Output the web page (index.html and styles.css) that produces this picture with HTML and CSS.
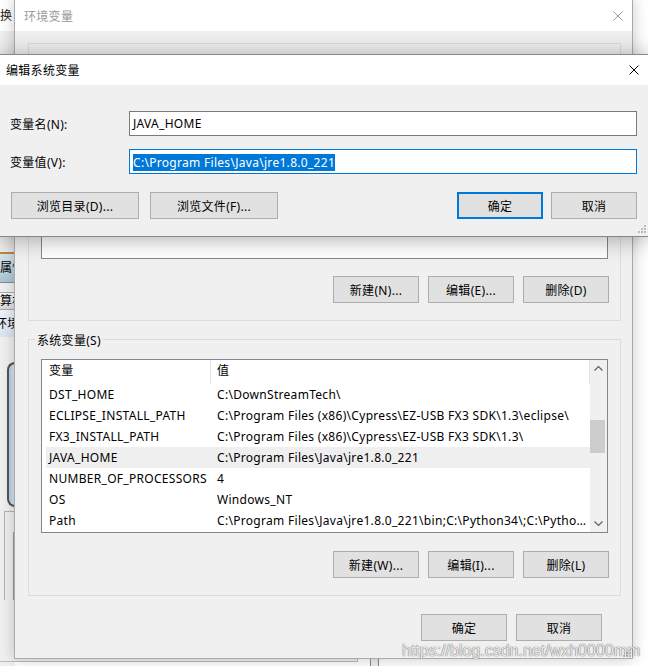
FILE: index.html
```html
<!DOCTYPE html>
<html lang="zh-CN">
<head>
  <meta charset="UTF-8" />
  <title>编辑系统变量</title>
  <link rel="stylesheet" href="styles.css">
</head>
<body>
<div class="desktop">

  <!-- ventana de Propiedades del sistema, solo se ve una franja -->
  <div class="sys-window">
    <div class="sys-top">换</div>
    <div class="sys-gap"></div>
    <div class="sys-tab">属性</div>
    <div class="sys-btn">算机</div>
    <div class="sys-env">环境</div>
    <div class="sys-frame"></div>
    <div class="sys-group">系<div class="sys-inner"></div></div>
  </div>

  <div class="bg-panel"></div>
  <div class="bg-line"></div>

  <!-- 环境变量 -->
  <div class="env-window">
    <div class="titlebar inactive">
      <span>环境变量</span>
      <svg class="close" width="10" height="10" viewBox="0 0 10 10"><path d="M0.5 0.5 L9.5 9.5 M9.5 0.5 L0.5 9.5" stroke="#999" stroke-width="1" fill="none"/></svg>
    </div>
    <div class="env-body">
      <div class="group user-group">
        <div class="listbox user-list"></div>
        <div class="btn-row">
          <button class="btn">新建(N)...</button>
          <button class="btn">编辑(E)...</button>
          <button class="btn">删除(D)</button>
        </div>
      </div>

      <div class="group">
        <div class="group-label">系统变量(S)</div>
        <div class="listbox sys-list">
          <div class="list-rows">
            <div class="list-head"><div class="c1">变量</div><div class="c2">值</div></div>
            <div class="row"><div class="c1">DST_HOME</div><div class="c2">C:\DownStreamTech\</div></div>
            <div class="row"><div class="c1">ECLIPSE_INSTALL_PATH</div><div class="c2">C:\Program Files (x86)\Cypress\EZ-USB FX3 SDK\1.3\eclipse\</div></div>
            <div class="row"><div class="c1">FX3_INSTALL_PATH</div><div class="c2">C:\Program Files (x86)\Cypress\EZ-USB FX3 SDK\1.3\</div></div>
            <div class="row selected"><div class="c1">JAVA_HOME</div><div class="c2">C:\Program Files\Java\jre1.8.0_221</div></div>
            <div class="row"><div class="c1">NUMBER_OF_PROCESSORS</div><div class="c2">4</div></div>
            <div class="row"><div class="c1">OS</div><div class="c2">Windows_NT</div></div>
            <div class="row"><div class="c1">Path</div><div class="c2">C:\Program Files\Java\jre1.8.0_221\bin;C:\Python34\;C:\Python34\Scripts\;C:\Windows\system32</div></div>
          </div>
          <div class="scrollbar">
            <svg width="17" height="17" viewBox="0 0 17 17"><path d="M4.5 10.5 L8.5 6.5 L12.5 10.5" stroke="#606060" stroke-width="1.2" fill="none"/></svg>
            <div class="track"><div class="thumb"></div></div>
            <svg width="17" height="17" viewBox="0 0 17 17"><path d="M4.5 6.5 L8.5 10.5 L12.5 6.5" stroke="#606060" stroke-width="1.2" fill="none"/></svg>
          </div>
        </div>
        <div class="btn-row">
          <button class="btn">新建(W)...</button>
          <button class="btn">编辑(I)...</button>
          <button class="btn">删除(L)</button>
        </div>
      </div>

      <div class="btn-row dialog-btns">
        <button class="btn">确定</button>
        <button class="btn">取消</button>
      </div>
    </div>
    <svg class="grip" width="9" height="9" viewBox="0 0 9 9"><path d="M7 1h2v2h-2z M4 4h2v2h-2z M7 4h2v2h-2z M1 7h2v2h-2z M4 7h2v2h-2z M7 7h2v2h-2z" fill="#bcbcbc"/></svg>
  </div>

  <!-- 编辑系统变量 -->
  <div class="edit-dialog">
    <div class="titlebar">
      <span>编辑系统变量</span>
      <svg class="close" width="10" height="10" viewBox="0 0 10 10"><path d="M0.5 0.5 L9.5 9.5 M9.5 0.5 L0.5 9.5" stroke="#000" stroke-width="1" fill="none"/></svg>
    </div>
    <div class="edit-body">
      <div class="field">
        <label>变量名(N):</label>
        <div class="textbox">JAVA_HOME</div>
      </div>
      <div class="field">
        <label>变量值(V):</label>
        <div class="textbox focused"><span class="sel">C:\Program Files\Java\jre1.8.0_221</span></div>
      </div>
      <div class="edit-btns">
        <button class="btn wide">浏览目录(D)...</button>
        <button class="btn wide">浏览文件(F)...</button>
        <span class="spacer"></span>
        <button class="btn default">确定</button>
        <button class="btn">取消</button>
      </div>
    </div>
    <svg class="grip" width="9" height="9" viewBox="0 0 9 9"><path d="M7 1h2v2h-2z M4 4h2v2h-2z M7 4h2v2h-2z M1 7h2v2h-2z M4 7h2v2h-2z M7 7h2v2h-2z" fill="#bcbcbc"/></svg>
  </div>

  <div class="watermark">https://blog.csdn.net/wxh0000mm</div>
</div>
</body>
</html>
```

FILE: styles.css
```css
* {
  box-sizing: border-box;
}

body {
  margin: 0;
  background: #fff;
  font-family: 'Noto Sans', 'Noto Sans CJK SC', sans-serif;
  font-size: 12px;
  letter-spacing: 0.3px;
  color: #000;
}

.desktop {
  position: relative;
  width: 648px;
  height: 666px;
  overflow: hidden;
  background: #fff;
}

/* franja de la ventana de atrás */
.sys-window {
  position: absolute;
  left: 0;
  top: 0;
  width: 15px;
  height: 666px;
  background: #f0f0f0;
  display: flex;
  flex-direction: column;
  overflow: hidden;
  white-space: nowrap;
}

.sys-top {
  flex: none;
  height: 31px;
  line-height: 31px;
  background: #fff;
  margin-left: -2px;
  padding-left: 2px;
  color: #222;
}

.sys-gap {
  flex: none;
  height: 221px;
}

.sys-tab {
  flex: none;
  height: 31px;
  line-height: 28px;
  border-top: 2px solid #c08a44;
  border-bottom: 1px solid #7f8f99;
  background: linear-gradient(#d9e8ef, #a8c5d6);
}

.sys-btn {
  flex: none;
  margin-top: 9px;
  height: 18px;
  line-height: 16px;
  border-top: 1px solid #aaa;
  border-bottom: 1px solid #aaa;
  background: linear-gradient(#fbfbfb, #dadada);
}

.sys-env {
  flex: none;
  height: 27px;
  line-height: 27px;
  margin-left: -5px;
  background: linear-gradient(#eef3fa, #d9e5f3);
}

.sys-frame {
  flex: none;
  margin: 25px 0 0 7px;
  height: 145px;
  border: 2px solid #555;
  border-right: none;
  border-radius: 8px 0 0 8px;
  background: linear-gradient(90deg, #b9cde2, #e3ecf5);
}

.sys-group {
  flex: none;
  margin: 4px 0 0 4px;
  height: 107px;
  border-left: 1px solid #b5b5b5;
  border-top: 1px solid #b5b5b5;
  padding-left: 8px;
  line-height: 14px;
}

.sys-inner {
  margin: 6px 0 0 0;
  height: 86px;
  border-left: 1px solid #9a9a9a;
  border-bottom: 1px solid #9a9a9a;
}

.bg-panel {
  position: absolute;
  left: 0;
  top: 600px;
  width: 358px;
  height: 62px;
  background: #f0f0f0;
  border-right: 1px solid #bbb;
  border-bottom: 1px solid #bbb;
}

.bg-line {
  position: absolute;
  left: 370px;
  top: 640px;
  width: 9px;
  height: 30px;
  background: #e9eef0;
  border-left: 1px solid #888;
  border-right: 1px solid #888;
}

/* ventanas */
.titlebar {
  display: flex;
  align-items: center;
  justify-content: space-between;
  background: #fff;
}

.titlebar.inactive {
  color: #999;
}

.close {
  display: block;
}

.env-window {
  position: absolute;
  left: 14px;
  top: -1px;
  width: 619px;
  height: 660px;
  border: 1px solid #aaa;
  background: #f0f0f0;
  box-shadow: 0 0 14px rgba(0, 0, 0, 0.22);
}

.env-window .titlebar {
  height: 31px;
  padding: 0 9px 0 9px;
}

.env-body {
  padding: 0 11px 0 13px;
  display: flex;
  flex-direction: column;
}

.group {
  border: 1px solid #dcdcdc;
  padding: 0 12px 17px 12px;
  display: flex;
  flex-direction: column;
  margin-top: 18px;
}

.user-group {
  margin-top: 12px;
  padding-top: 15px;
}

.group-label {
  align-self: flex-start;
  margin: -7px 0 0 -6px;
  padding: 0 2px;
  line-height: 16px;
  background: #f0f0f0;
}

.listbox {
  border: 1px solid #828790;
  background: #fff;
}

.user-list {
  height: 200px;
}

.sys-list {
  margin-top: 10px;
  height: 174px;
  display: flex;
}

.list-rows {
  flex: 1;
  min-width: 0;
  padding-left: 4px;
}

.list-head,
.row {
  display: flex;
  white-space: nowrap;
}

.list-head {
  height: 24px;
  line-height: 22px;
}

.row {
  height: 21px;
  line-height: 21px;
}

.row.selected {
  background: #efefef;
}

.c1 {
  width: 165px;
  flex: none;
  padding-left: 3px;
  overflow: hidden;
}

.c2 {
  flex: 1;
  min-width: 0;
  padding-left: 6px;
  overflow: hidden;
  text-overflow: ellipsis;
}

.list-head .c1,
.list-head .c2 {
  border-right: 1px solid #e5e5e5;
}

.scrollbar {
  width: 17px;
  flex: none;
  background: #f0f0f0;
  display: flex;
  flex-direction: column;
}

.scrollbar svg {
  display: block;
  flex: none;
}

.track {
  flex: 1;
  padding-top: 43px;
}

.thumb {
  height: 33px;
  margin: 0 2px 0 0;
  background: #cdcdcd;
}

.btn-row {
  display: flex;
  justify-content: flex-end;
  gap: 9px;
  margin-top: 18px;
  margin-right: -1px;
}

.user-group .btn-row {
  margin-top: 17px;
}

.dialog-btns {
  margin-right: 19px;
}

.btn {
  width: 86px;
  height: 27px;
  padding: 0;
  margin: 0;
  border: 1px solid #adadad;
  background: #e1e1e1;
  font-family: inherit;
  font-size: 12px;
  letter-spacing: 0.3px;
  color: #000;
}

.btn.wide {
  width: 128px;
}

.btn.default {
  border: 2px solid #0078d7;
}

.grip {
  position: absolute;
  right: 1px;
  bottom: 1px;
}

/* 编辑系统变量 */
.edit-dialog {
  position: absolute;
  left: -1px;
  top: 54px;
  width: 651px;
  height: 183px;
  border: 1px solid #888;
  background: #f0f0f0;
  box-shadow: 0 2px 22px rgba(0, 0, 0, 0.32);
}

.edit-dialog .titlebar {
  height: 30px;
  padding: 0 10px 0 6px;
}

.edit-body {
  padding: 26px 12px 0 10px;
  display: flex;
  flex-direction: column;
}

.field {
  display: flex;
  align-items: center;
  margin-bottom: 13px;
}

.field label {
  width: 119px;
  flex: none;
}

.textbox {
  flex: 1;
  height: 25px;
  line-height: 23px;
  padding-left: 3px;
  border: 1px solid #7a7a7a;
  background: #fff;
  white-space: nowrap;
}

.textbox.focused {
  border-color: #0078d7;
}

.sel {
  display: inline-block;
  line-height: 17px;
  vertical-align: middle;
  background: #0078d7;
  color: #fff;
}

.edit-btns {
  display: flex;
  margin-top: 5px;
  padding-left: 1px;
}

.edit-btns .btn.wide + .btn.wide {
  margin-left: 11px;
}

.spacer {
  flex: 1;
}

.edit-btns .btn + .btn:not(.wide) {
  margin-left: 8px;
}

.edit-dialog .grip {
  right: 3px;
  bottom: 3px;
}

.watermark {
  position: absolute;
  left: 402px;
  top: 641px;
  font-family: 'Liberation Sans', sans-serif;
  font-size: 16px;
  line-height: 20px;
  letter-spacing: 0;
  color: rgba(255, 255, 255, 0.9);
  text-shadow: 0 0 1px rgba(0, 0, 0, 0.6), 0 0 1px rgba(0, 0, 0, 0.4);
  white-space: nowrap;
}
```
